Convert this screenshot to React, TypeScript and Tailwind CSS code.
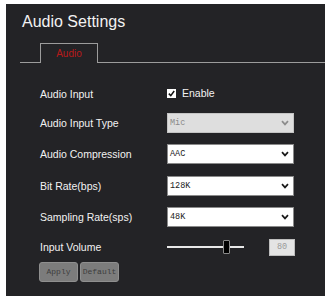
import React from "react";

const Chevron = ({ muted }: { muted?: boolean }) => (
  <svg width="8" height="6" viewBox="0 0 8 6" className="mr-[4px]">
    <path d="M1 1.2 L4 4.4 L7 1.2" fill="none" stroke={muted ? "#8c8c8c" : "#1a1a1a"} strokeWidth="1.7" />
  </svg>
);

function FakeSelect({ value, disabled }: { value: string; disabled?: boolean }) {
  return (
    <div
      className={
        disabled
          ? "w-[127px] h-[20px] flex items-center justify-between bg-[#dedede] border border-[#c4c4c4] text-[#8a8a8a]"
          : "w-[127px] h-[20px] flex items-center justify-between bg-white border border-[#8a8a8a] text-[#222]"
      }
    >
      <span className="pl-[2px] text-[8.5px] font-['Liberation_Mono',monospace]">{value}</span>
      <Chevron muted={disabled} />
    </div>
  );
}

function Row({ label, h, children }: { label: string; h: string; children: React.ReactNode }) {
  return (
    <div className={`flex items-center ${h}`}>
      <div className="w-[161px] pl-[34px] text-[10.5px] leading-[12px]">{label}</div>
      {children}
    </div>
  );
}

export default function App() {
  return (
    <div className="w-[332px] h-[300px] bg-white pt-[4px] pl-[6px] font-['Liberation_Sans',Arial,sans-serif]">
      <div className="w-[319px] h-[292px] bg-[#232326] text-[#f2f2f2]">
        <h1 className="pl-[16px] pt-[9px] text-[16px] leading-[18px]">Audio Settings</h1>

        {/* tab strip */}
        <div className="mt-[12px] flex items-end pl-[14px]">
          <div className="w-[20px] border-b border-[#9c9c9c]" />
          <div className="w-[58px] h-[20px] border border-b-0 border-[#9c9c9c] text-center text-[#b81a1a] text-[10px] leading-[19px]">
            Audio
          </div>
          <div className="flex-1 border-b border-[#9c9c9c]" />
        </div>

        <div className="mt-[16px]">
          <Row label="Audio Input" h="h-[29px]">
            <div className="flex items-center gap-[6px]">
              <div className="w-[9px] h-[9px] bg-white flex items-center justify-center">
                <svg width="7" height="7" viewBox="0 0 7 7">
                  <path d="M0.8 3.6 L2.8 5.6 L6.2 1" fill="none" stroke="#111" strokeWidth="1.5" />
                </svg>
              </div>
              <span className="text-[10.5px]">Enable</span>
            </div>
          </Row>
          <Row label="Audio Input Type" h="h-[30px]">
            <FakeSelect value="Mic" disabled />
          </Row>
          <Row label="Audio Compression" h="h-[32px]">
            <FakeSelect value="AAC" />
          </Row>
          <Row label="Bit Rate(bps)" h="h-[32px]">
            <FakeSelect value="128K" />
          </Row>
          <Row label="Sampling Rate(sps)" h="h-[30px]">
            <FakeSelect value="48K" />
          </Row>
          <Row label="Input Volume" h="h-[30px]">
            <div className="flex items-center">
              <div className="relative w-[77px] h-[2px] bg-[#e8e8e8]">
                <div className="absolute left-[56px] top-[-6px] w-[7px] h-[14px] bg-black border border-[#8a8a8a] rounded-[1px]" />
              </div>
              <div className="ml-[25px] w-[26px] h-[17px] bg-[#e4e4e4] border border-[#bdbdbd] text-[#9a9a9a] text-[8.5px] leading-[15px] text-center font-['Liberation_Mono',monospace]">
                80
              </div>
            </div>
          </Row>
        </div>

        <div className="flex gap-[2px] pl-[33px]">
          <button className="w-[39px] h-[20px] bg-[#7c7c7c] border border-[#8f8f8f] rounded-[3px] text-[#3c3c3c] text-[8px] font-['Liberation_Mono',monospace]">
            Apply
          </button>
          <button className="w-[39px] h-[20px] bg-[#7c7c7c] border border-[#8f8f8f] rounded-[3px] text-[#3c3c3c] text-[8px] font-['Liberation_Mono',monospace]">
            Default
          </button>
        </div>
      </div>
    </div>
  );
}
